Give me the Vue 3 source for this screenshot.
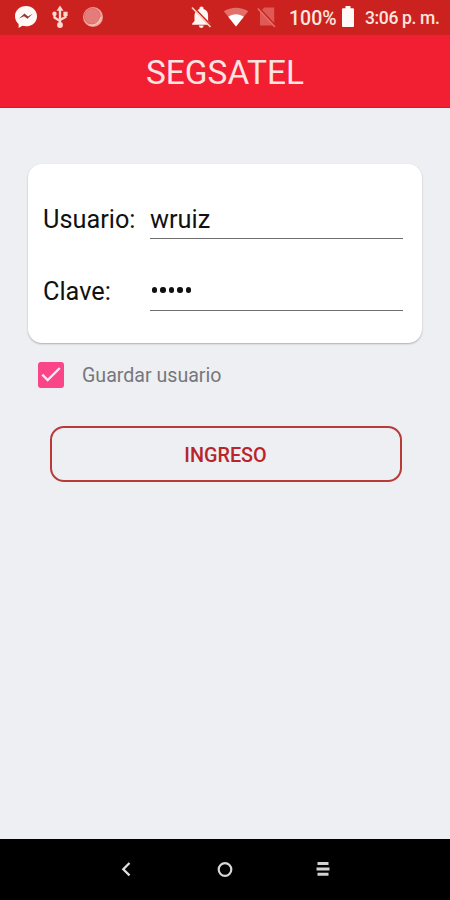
<template>
  <div class="screen">
    <header class="status-bar">
      <div class="status-left">
        <svg class="messenger" viewBox="0 0 24 24" width="24" height="24">
          <path d="M12 1C5.700 1 1 5.400 1 11.200c0 3.200 1.400 5.900 3.600 7.700V23l3.700-2.200c1.200.3 2.400.5 3.700.5 6.300 0 11-4.400 11-10.100S18.300 1 12 1z" fill="#fffaf6" />
          <path d="M5 13.500l5.500-5 3.500 3L19 8.500l-5.500 5.300-3.500-2.500z" fill="#943838" />
        </svg>
        <svg class="usb" viewBox="0 0 18 24" width="18" height="24">
          <path d="M9 4v15M9 16l-5.500-3.500V8M9 15l5.500-3V8" fill="none" stroke="#fbd8d0" stroke-width="2.300" />
          <path d="M9 .6l3.500 5.200h-7z" fill="#fbd8d0" />
          <circle cx="9" cy="20" r="2.900" fill="#fbd8d0" />
          <circle cx="3.500" cy="8.800" r="2.200" fill="#fbd8d0" />
          <path d="M12.400 6.800h4.200v4.200h-4.200z" fill="#fbd8d0" />
        </svg>
        <svg class="disc" viewBox="0 0 22 22" width="22" height="22">
          <circle cx="11" cy="11" r="10" fill="#efa19a" />
          <circle cx="10.300" cy="10.300" r="7.900" fill="#e57c79" stroke="#d9605e" stroke-width=".8" />
          <path d="M7 18.800a9.500 9.500 0 0 0 12-8" fill="none" stroke="#f8c3b4" stroke-width="1.500" />
        </svg>
      </div>
      <div class="status-right">
        <svg class="bell" viewBox="0 0 22 24" width="22" height="24">
          <path d="M11.500 1.500c1.200 0 2 .8 2 1.800v.7c3.200.8 4.600 3.300 4.600 6.300v5.800l2.300 2.500v1.200H2.200v-1.200l2.300-2.500v-5.800c0-3 1.800-5.500 5-6.300v-.7c0-1 .8-1.800 2-1.800zM8.900 20.500h4.800a2.400 2.400 0 0 1-4.800 0z" fill="#fff6f2" />
          <path d="M3.300 2l18 18.700" stroke="#cb2220" stroke-width="1.700" />
          <path d="M2 2.500l18.500 19.500" stroke="#ffd0bf" stroke-width="1.700" />
        </svg>
        <svg class="wifi" viewBox="0 0 26 20" width="26" height="20">
          <path d="M13 19.500L.8 4.300C8 -.6 18-.6 25.200 4.300z" fill="#e4706b" />
          <path d="M13 19.500L5.200 9.800c4.500-3.400 11.100-3.400 15.600 0z" fill="#fff" />
        </svg>
        <svg class="sim" viewBox="0 0 20 22" width="20" height="22">
          <path d="M7.200 1.500h10v18H3V6z" fill="#df5955" />
          <path d="M1.800 1.700l17 18.500" stroke="#cb2220" stroke-width="1.700" />
          <path d="M.8 2.500l17.200 18.500" stroke="#e4726b" stroke-width="1.500" />
        </svg>
        <span class="battery-text">100%</span>
        <svg class="battery" viewBox="0 0 12 22" width="12" height="22">
          <path d="M3.500 0h5v2.300H11q1 0 1 1V20q0 1-1 1H1q-1 0-1-1V3.300q0-1 1-1h2.500z" fill="#fffaf7" />
        </svg>
        <span class="clock">3:06 p. m.</span>
      </div>
    </header>

    <div class="toolbar">
      <h1 class="title">SEGSATEL</h1>
    </div>

    <main class="content">
      <section class="card">
        <div v-for="field in fields" :key="field.label" class="field">
          <span class="field-label">{{ field.label }}</span>
          <div class="field-input">
            <span v-if="!field.secret">{{ field.value }}</span>
            <span v-else class="dots">
              <i v-for="n in field.value.length" :key="n" class="dot"></i>
            </span>
          </div>
        </div>
      </section>

      <div class="remember" @click="remember = !remember">
        <span class="checkbox" :class="{ checked: remember }">
          <svg v-if="remember" viewBox="0 0 26 26" width="26" height="26">
            <path d="M4.300 12.700l5.400 5.300L21.800 6" fill="none" stroke="#ffe6f0" stroke-width="2.400" />
          </svg>
        </span>
        <span class="remember-label">Guardar usuario</span>
      </div>

      <button class="login">INGRESO</button>
    </main>

    <nav class="nav-bar">
      <svg viewBox="0 0 18 18" width="18" height="18">
        <path d="M12.500 3L6.300 9.200l6.200 6.200" fill="none" stroke="#dedede" stroke-width="2.300" />
      </svg>
      <svg viewBox="0 0 18 18" width="18" height="18">
        <circle cx="9" cy="9.500" r="6.300" fill="none" stroke="#d6d6d6" stroke-width="2.200" />
      </svg>
      <svg viewBox="0 0 18 18" width="18" height="18">
        <path d="M3.500 3.500h11M2.500 9h13M3.500 14.300h11" stroke="#d2d2d2" stroke-width="2.900" />
      </svg>
    </nav>
  </div>
</template>

<script setup>
import { ref } from 'vue'

const fields = [
  { label: 'Usuario:', value: 'wruiz', secret: false },
  { label: 'Clave:', value: '12345', secret: true }
]

const remember = ref(true)
</script>

<style>
body {
  margin: 0;
}
</style>

<style scoped>
.screen {
  display: flex;
  flex-direction: column;
  width: 450px;
  height: 900px;
  overflow: hidden;
  background: #edeff2;
  font-family: Roboto, sans-serif;
}

/* status bar */
.status-bar {
  display: flex;
  justify-content: space-between;
  height: 35px;
  box-sizing: border-box;
  padding: 0 10px 1px 14px;
  background: #cb2220;
  color: #ffe5dd;
  font-weight: 500;
}
.status-bar svg {
  flex: none;
}
.status-left,
.status-right {
  display: flex;
  align-items: center;
}
.usb {
  margin-left: 13px;
}
.disc {
  margin-left: 13px;
}
.wifi {
  margin-left: 11px;
}
.sim {
  margin-left: 8px;
}
.battery-text {
  width: 48px;
  margin-left: 12px;
  padding-top: 2px;
  font-size: 19.500px;
  white-space: nowrap;
}
.battery {
  margin: -1px 0 0 5px;
}
.clock {
  width: 75px;
  margin-left: 11px;
  padding-top: 2px;
  font-size: 17.500px;
  letter-spacing: -0.350px;
  white-space: nowrap;
}

/* title */
.toolbar {
  display: flex;
  align-items: center;
  justify-content: center;
  height: 73px;
  box-sizing: border-box;
  padding-top: 4px;
  background: #f21f33;
  border-bottom: 1px solid #c91d31;
}
.title {
  margin: 0;
  color: #ffe4e2;
  font-size: 33.400px;
  font-weight: 400;
  line-height: 40px;
}

.content {
  flex: 1;
  padding: 56px 28px 0;
}
.card {
  display: flex;
  flex-direction: column;
  gap: 32px;
  height: 179px;
  box-sizing: border-box;
  padding: 35px 19px 0 15px;
  border-radius: 14px;
  background: #fff;
  box-shadow: 0 1px 2px rgba(0, 0, 0, 0.28);
}
.field {
  display: flex;
  height: 40px;
  color: #111;
  font-size: 25.300px;
  line-height: 41px;
}
.field-label {
  width: 107px;
}
.field-input {
  flex: 1;
  border-bottom: 1px solid #707070;
}
.dots {
  display: flex;
  align-items: center;
  gap: 3px;
  height: 38px;
  padding-left: 2px;
}
.dot {
  width: 5.400px;
  height: 5.400px;
  border-radius: 50%;
  background: #111;
}

.remember {
  display: flex;
  align-items: center;
  margin: 19px 0 0 10px;
  height: 26px;
}
.checkbox {
  width: 26px;
  height: 26px;
  box-sizing: border-box;
  border: 2px solid #757575;
  border-radius: 3px;
}
.checkbox.checked {
  border: 0;
  background: #fa4588;
}
.checkbox svg {
  display: block;
}
.remember-label {
  margin-left: 18px;
  color: #76777b;
  font-size: 19.600px;
}

.login {
  display: block;
  width: 352px;
  height: 56px;
  margin: 38px 0 0 22px;
  padding: 2px 1px 0 0;
  border: 2px solid #b83a39;
  border-radius: 14px;
  background: transparent;
  color: #b8252a;
  font-family: inherit;
  font-size: 19.800px;
  font-weight: 500;
}

/* system navigation */
.nav-bar {
  display: flex;
  align-items: center;
  justify-content: space-between;
  height: 61px;
  box-sizing: border-box;
  padding: 0 118px 2px 117px;
  background: #000;
}
</style>
